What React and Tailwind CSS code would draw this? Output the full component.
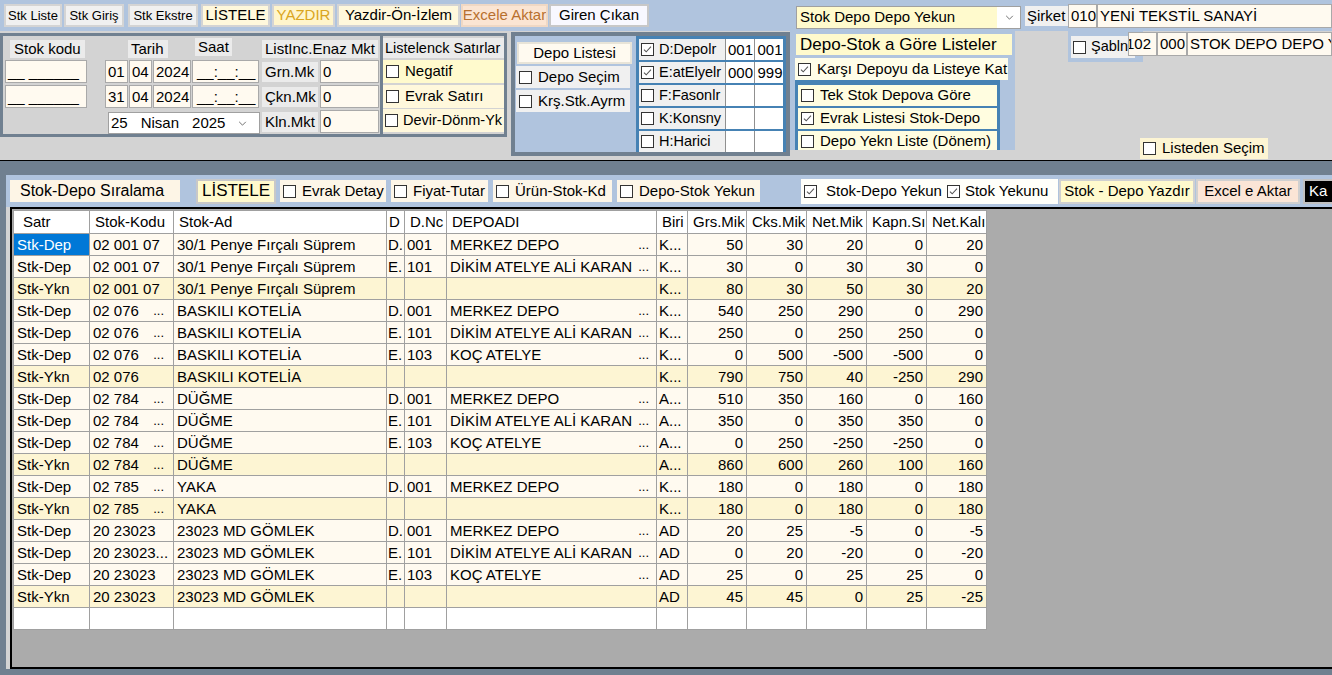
import React from 'react';

const Check = ({ on }) => (
  <span className="inline-flex h-[13px] w-[13px] shrink-0 items-center justify-center border border-[#333] bg-white">
    {on && (
      <svg viewBox="0 0 13 13" className="h-[11px] w-[11px]">
        <path d="M2.3 6.6l2.7 2.7 5.6-6.2" fill="none" stroke="#555" strokeWidth="1.2" />
      </svg>
    )}
  </span>
);

const Cb = ({ on, children, className = '', t = 'text-[15px] gap-[6px] pl-[3px]' }) => (
  <div className={`flex shrink-0 items-center overflow-hidden whitespace-nowrap ${t} ${className}`}>
    <Check on={on} />
    <span>{children}</span>
  </div>
);

const Box = ({ children, className = '', p = 'pl-[2px]' }) => (
  <div className={`shrink-0 overflow-hidden whitespace-nowrap border border-[#a9a9a9] bg-[#fffaf0] text-[15px] leading-[21px] ${p} ${className}`}>
    {children}
  </div>
);

const Lbl = ({ children, className = '', t = 'text-[15px] leading-[18px] pl-[3px]' }) => (
  <div className={`shrink-0 overflow-hidden whitespace-nowrap bg-[#ebebeb] ${t} ${className}`}>
    {children}
  </div>
);

const Btn = ({ children, className = '' }) => (
  <div className={`flex shrink-0 items-center justify-center overflow-hidden whitespace-nowrap border-2 ${className}`}>
    {children}
  </div>
);

const rows = [
  ['Dep', '02 001 07', false, '30/1 Penye Fırçalı Süprem', 'D.', '001', 'MERKEZ DEPO', 'K...', [50, 30, 20, 0, 20]],
  ['Dep', '02 001 07', false, '30/1 Penye Fırçalı Süprem', 'E.', '101', 'DİKİM ATELYE ALİ KARAN', 'K...', [30, 0, 30, 30, 0]],
  ['Ykn', '02 001 07', false, '30/1 Penye Fırçalı Süprem', '', '', '', 'K...', [80, 30, 50, 30, 20]],
  ['Dep', '02 076', true, 'BASKILI KOTELİA', 'D.', '001', 'MERKEZ DEPO', 'K...', [540, 250, 290, 0, 290]],
  ['Dep', '02 076', true, 'BASKILI KOTELİA', 'E.', '101', 'DİKİM ATELYE ALİ KARAN', 'K...', [250, 0, 250, 250, 0]],
  ['Dep', '02 076', true, 'BASKILI KOTELİA', 'E.', '103', 'KOÇ ATELYE', 'K...', [0, 500, -500, -500, 0]],
  ['Ykn', '02 076', false, 'BASKILI KOTELİA', '', '', '', 'K...', [790, 750, 40, -250, 290]],
  ['Dep', '02 784', true, 'DÜĞME', 'D.', '001', 'MERKEZ DEPO', 'A...', [510, 350, 160, 0, 160]],
  ['Dep', '02 784', true, 'DÜĞME', 'E.', '101', 'DİKİM ATELYE ALİ KARAN', 'A...', [350, 0, 350, 350, 0]],
  ['Dep', '02 784', true, 'DÜĞME', 'E.', '103', 'KOÇ ATELYE', 'A...', [0, 250, -250, -250, 0]],
  ['Ykn', '02 784', true, 'DÜĞME', '', '', '', 'A...', [860, 600, 260, 100, 160]],
  ['Dep', '02 785', true, 'YAKA', 'D.', '001', 'MERKEZ DEPO', 'K...', [180, 0, 180, 0, 180]],
  ['Ykn', '02 785', true, 'YAKA', '', '', '', 'K...', [180, 0, 180, 0, 180]],
  ['Dep', '20 23023', false, '23023 MD GÖMLEK', 'D.', '001', 'MERKEZ DEPO', 'AD', [20, 25, -5, 0, -5]],
  ['Dep', '20 23023...', false, '23023 MD GÖMLEK', 'E.', '101', 'DİKİM ATELYE ALİ KARAN', 'AD', [0, 20, -20, 0, -20]],
  ['Dep', '20 23023', false, '23023 MD GÖMLEK', 'E.', '103', 'KOÇ ATELYE', 'AD', [25, 0, 25, 25, 0]],
  ['Ykn', '20 23023', false, '23023 MD GÖMLEK', '', '', '', 'AD', [45, 45, 0, 25, -25]],
];

const cols = [76, 84, 213, 18, 42, 210, 31, 59, 60, 60, 60, 60];
const heads = ['Satr', 'Stok-Kodu', 'Stok-Ad', 'D', 'D.Nc', 'DEPOADI', 'Biri', 'Grs.Mik', 'Cks.Mik', 'Net.Mik', 'Kapn.Sı', 'Net.Kalı'];

const td = 'border border-[#a0a0a0] overflow-hidden whitespace-nowrap py-0 leading-[20px]';

export default function App() {
  return (
    <div className="h-[675px] w-[1332px] overflow-hidden bg-[#d3d3d3] font-['Liberation_Sans',Arial,sans-serif] text-black">
      {/* ust serit */}
      <div className="flex h-[31px] items-start bg-[#b0c4de]">
        <div className="ml-[4px] mt-[4px] flex shrink-0 gap-[2px]">
          <Btn className="h-[23px] w-[58px] border-[#d4d4d4] bg-[#f0f0f0] text-[13px]">Stk Liste</Btn>
          <Btn className="h-[23px] w-[60px] border-[#d4d4d4] bg-[#f0f0f0] text-[13px]">Stk Giriş</Btn>
          <Btn className="ml-[2px] h-[23px] w-[70px] border-[#d4d4d4] bg-[#f0f0f0] text-[13px]">Stk Ekstre</Btn>
          <Btn className="ml-[1px] h-[23px] w-[69px] border-[#d4d4d4] bg-[#fff8dc] text-[15px]">LİSTELE</Btn>
          <Btn className="h-[23px] w-[63px] border-[#d4d4d4] bg-[#fff5cc] text-[15px] text-[#daa520]">YAZDIR</Btn>
          <Btn className="h-[23px] w-[123px] border-[#d4d4d4] bg-[#fff8dc] text-[15px]">Yazdir-Ön-İzlem</Btn>
          <Btn className="-ml-[1px] h-[23px] w-[87px] border-[#f0d8c4] bg-[#fbe5d3] text-[15px] text-[#b8702e]">Excele Aktar</Btn>
          <Btn className="-ml-[1px] h-[23px] w-[100px] border-[#c8c8c8] bg-[#f8f8ff] text-[15px]">Giren Çıkan</Btn>
        </div>
        <div className="ml-[147px] mt-[6px] flex h-[23px] w-[225px] shrink-0 items-center border border-[#a0a0a0] bg-white">
          <div className="flex h-full w-[200px] items-center bg-[#fffacd] pl-[3px] text-[15px]">Stok Depo Depo Yekun</div>
          <svg viewBox="0 0 10 6" className="ml-[8px] h-[5px] w-[9px]">
            <path d="M1 1l4 4 4-4" fill="none" stroke="#555" strokeWidth="1" />
          </svg>
        </div>
        <div className="ml-[4px] mt-[6px] h-[20px] w-[43px] shrink-0 bg-[#f0f0f0] pl-[2px] text-[15px] leading-[20px]">Şirket</div>
        <Box className="mt-[4px] h-[24px] w-[29px]">010</Box>
        <Box className="mt-[4px] h-[24px] min-w-0 flex-1">YENİ TEKSTİL SANAYİ</Box>
      </div>

      {/* ust paneller */}
      <div className="flex h-[129px]">
        <div className="mt-[2px] flex h-[104px] w-[383px] shrink-0 border-[3px] border-[#708090]">
          <div className="ml-[2px] w-[82px] pt-[4px]">
            <Lbl className="ml-[5px] h-[18px] w-[75px]" t="text-[15px] leading-[18px] pl-[4px]">Stok kodu</Lbl>
            <Box className="mt-[2px] h-[23px]">__ ______</Box>
            <Box className="mt-[2px] h-[23px]">__ ______</Box>
          </div>
          <div className="ml-[18px] w-[155px]">
            <div className="flex h-[24px] items-start">
              <Lbl className="ml-[23px] mt-[4px] h-[18px] w-[40px]">Tarih</Lbl>
              <Lbl className="ml-[27px] mt-[2px] h-[18px] w-[37px]">Saat</Lbl>
            </div>
            {[['01', '04', '2024'], ['31', '04', '2024']].map((d, i) => (
              <div key={i} className={`flex gap-[1px] ${i ? 'mt-[2px]' : ''}`}>
                <Box className="h-[23px] w-[23px]">{d[0]}</Box>
                <Box className="h-[23px] w-[23px]">{d[1]}</Box>
                <Box className="h-[23px] w-[38px]">{d[2]}</Box>
                <Box className="h-[23px] w-[67px]" p="pl-[4px]">__:__:__</Box>
              </div>
            ))}
            <div className="ml-[3px] mt-[4px] flex h-[22px] w-[152px] items-center border border-[#a0a0a0] bg-white text-[15px]">
              <span className="ml-[2px]">25</span>
              <span className="ml-[13px]">Nisan</span>
              <span className="ml-[13px]">2025</span>
              <svg viewBox="0 0 10 6" className="ml-[13px] h-[5px] w-[9px]">
                <path d="M1 1l4 4 4-4" fill="none" stroke="#555" strokeWidth="1" />
              </svg>
            </div>
          </div>
          <div className="ml-[2px] w-[117px] pt-[4px]">
            <Lbl className="h-[18px] w-[116px]">ListInc.Enaz Mkt</Lbl>
            {['Grn.Mk', 'Çkn.Mk', 'Kln.Mkt'].map((l) => (
              <div key={l} className="mt-[2px] flex h-[23px] items-center">
                <Lbl className="h-[20px] w-[56px]" t="text-[15px] leading-[20px] pl-[3px]">{l}</Lbl>
                <Box className="ml-[2px] h-[23px] w-[59px]">0</Box>
              </div>
            ))}
          </div>
        </div>

        <div className="mt-[2px] h-[104px] w-[124px] shrink-0 border-y-[3px] border-r-[3px] border-[#708090]">
          <Lbl className="mt-[2px] h-[20px] w-[121px]" t="text-[14.5px] leading-[20px] pl-[2px]">Listelenck Satırlar</Lbl>
          <Cb className="mt-[2px] h-[23px] w-[121px] bg-[#fffacd]">Negatif</Cb>
          <Cb className="mt-[2px] h-[23px] w-[121px] bg-[#fff8dc]">Evrak Satırı</Cb>
          <Cb className="mt-[1px] h-[23px] w-[121px] bg-[#fff8dc]" t="text-[14.5px] gap-[5px] pl-[2px]">Devir-Dönm-Yk</Cb>
        </div>

        <div className="ml-[4px] mt-[1px] flex h-[124px] w-[279px] shrink-0 border-[4px] border-[#708090] bg-[#b0c4de]">
          <div className="w-[121px] pl-[1px] pt-[6px]">
            <Btn className="ml-[1px] h-[22px] w-[115px] border-[#e8e4d8] bg-[#fffaf0] text-[15px]">Depo Listesi</Btn>
            <Cb className="mt-[2px] h-[22px] w-[114px] bg-[#f0f0f0]">Depo Seçim</Cb>
            <Cb className="mt-[2px] h-[22px] w-[114px] bg-[#f0f0f0]">Krş.Stk.Ayrm</Cb>
          </div>
          <div className="flex w-[150px] flex-col gap-[2px] bg-[#4682b4] px-[3px] pt-[3px]">
            {[
              ['D:Depolr', true, '001', '001'],
              ['E:atElyelr', true, '000', '999'],
              ['F:Fasonlr', false, '', ''],
              ['K:Konsny', false, '', ''],
              ['H:Harici', false, '', ''],
            ].map(([l, on, a, b]) => (
              <div key={l} className="flex h-[21px]">
                <Cb on={on} className="w-[86px] bg-[#f0f0f0]" t="text-[14.5px] gap-[5px] pl-[2px]">{l}</Cb>
                <div className="w-[31px] border-l border-[#909090] bg-white pl-[2px] text-[15px] leading-[21px]">{a}</div>
                <div className="w-[30px] border-l border-[#909090] bg-white pl-[2px] text-[15px] leading-[21px]">{b}</div>
              </div>
            ))}
          </div>
        </div>

        <div className="h-[119px] w-[225px] shrink-0 overflow-hidden bg-[#b0c4de]">
          <div className="ml-[6px] mt-[3px] h-[21px] w-[216px] overflow-hidden whitespace-nowrap bg-[#fffacd] pl-[4px] text-[17px] leading-[21px]">Depo-Stok a Göre Listeler</div>
          <Cb on className="ml-[5px] mt-[3px] h-[22px] w-[213px] bg-[#fffde8]">Karşı Depoyu da Listeye Kat</Cb>
          <div className="ml-[5px] flex h-[72px] w-[205px] flex-col gap-[2px] bg-[#4682b4] px-[3px] pt-[5px]">
            <Cb className="h-[21px] bg-[#fffde0]">Tek Stok Depova Göre</Cb>
            <Cb on className="h-[21px] bg-[#fffde0]">Evrak Listesi Stok-Depo</Cb>
            <Cb className="h-[21px] bg-[#fffde0]">Depo Yekn Liste (Dönem)</Cb>
          </div>
        </div>

        <div className="flex min-w-0 flex-1 flex-col">
          <div className="flex items-start">
            <div className="ml-[53px] h-[31px] w-[75px] shrink-0 bg-[#b0c4de] pl-[3px] pt-[5px]">
              <Cb className="h-[22px] w-[64px] bg-[#f0f0f0]" t="text-[14.5px] gap-[5px] pl-[2px]">Şabln</Cb>
            </div>
            <div className="-ml-[15px] mt-[1px] flex min-w-0 flex-1">
              <Box className="h-[24px] w-[29px]" p="pl-0">
                <span className="-ml-[3px]">102</span>
              </Box>
              <Box className="h-[24px] w-[30px]">000</Box>
              <Box className="h-[24px] min-w-0 flex-1">STOK DEPO DEPO YEKUN</Box>
            </div>
          </div>
          <Cb className="mb-[1px] ml-[125px] mt-auto h-[21px] w-[128px] bg-[#fdf5d3]">Listeden Seçim</Cb>
        </div>
      </div>

      {/* alt bolum */}
      <div className="h-px bg-black" />
      <div className="h-[514px] bg-[#708090] pb-[6px] pl-[6px] pt-[14px]">
        <div className="flex h-[32px] items-center overflow-hidden bg-[#b0c4de]">
          <div className="ml-[4px] h-[22px] w-[170px] shrink-0 bg-[#fdf5e6] pl-[10px] text-[16px] leading-[22px]">Stok-Depo Sıralama</div>
          <Btn className="ml-[16px] h-[25px] w-[80px] border-[#c8c8c8] bg-[#fffacd] text-[17px]">LİSTELE</Btn>
          <Cb className="ml-[4px] h-[22px] w-[106px] bg-[#fdf6e8]">Evrak Detay</Cb>
          <Cb className="ml-[5px] h-[22px] w-[97px] bg-[#fdf6e8]">Fiyat-Tutar</Cb>
          <Cb className="ml-[5px] h-[22px] w-[119px] bg-[#fdf6e8]">Ürün-Stok-Kd</Cb>
          <Cb className="ml-[5px] h-[22px] w-[143px] bg-[#fdf6e8]">Depo-Stok Yekun</Cb>
          <div className="ml-[41px] flex h-[25px] w-[257px] shrink-0 items-center bg-[#fffffa]">
            <Cb on t="text-[15px] gap-[9px] pl-[3px]">Stok-Depo Yekun</Cb>
            <Cb on className="ml-[2px]" t="text-[15px] gap-[5px] pl-[3px]">Stok Yekunu</Cb>
          </div>
          <Btn className="ml-[1px] h-[25px] w-[136px] border-[#d0d0d0] bg-[#fffacd] text-[15px]">Stok - Depo Yazdır</Btn>
          <Btn className="ml-[1px] h-[25px] w-[104px] border-[#d0d0d0] bg-[#fbe5d6] text-[15px]">Excel e Aktar</Btn>
          <div className="ml-[3px] flex h-[25px] w-[40px] shrink-0 items-center border-2 border-[#c0c0c0] bg-black pl-[4px] text-[15px] text-white">Ka</div>
        </div>
        <div className="h-[462px] bg-[#d3d3d3] pl-[4px]">
          <div className="h-full border-b-2 border-l-2 border-t-2 border-black bg-[#ababab] pl-[1px] pt-[1px]">
            <table className="w-[973px] table-fixed border-collapse text-[15px]">
              <colgroup>
                {cols.map((w, i) => (
                  <col key={i} style={{ width: w }} />
                ))}
              </colgroup>
              <thead>
                <tr className="h-[23px] bg-white">
                  {heads.map((h, i) => (
                    <th key={h} className={`${td} pr-[2px] text-left font-normal ${i === 0 ? 'pl-[9px]' : i === 3 ? 'pl-[2px]' : 'pl-[5px]'}`}>{h}</th>
                  ))}
                </tr>
              </thead>
              <tbody>
                {rows.map(([t, kod, dots, ad, d, dn, dep, biri, n], r) => (
                  <tr key={r} className={`h-[22px] ${t === 'Ykn' ? 'bg-[#fdf5d3]' : 'bg-[#fffaf0]'}`}>
                    <td className={`${td} px-[3px] ${r === 0 ? 'bg-[#0078d7] text-white' : ''}`}>Stk-{t}</td>
                    <td className={`${td} px-[3px]`}>
                      <div className="flex justify-between pr-[6px]">
                        <span>{kod}</span>
                        {dots && <span className="text-[13px]">...</span>}
                      </div>
                    </td>
                    <td className={`${td} px-[3px]`}>{ad}</td>
                    <td className={`${td} px-[1px]`}>{d}</td>
                    <td className={`${td} px-[2px]`}>{dn}</td>
                    <td className={`${td} px-[3px]`}>
                      <div className="flex justify-between pr-[4px]">
                        <span>{dep}</span>
                        {dep && <span className="text-[13px]">...</span>}
                      </div>
                    </td>
                    <td className={`${td} px-[2px]`}>{biri}</td>
                    {n.map((v, i) => (
                      <td key={i} className={`${td} px-[3px] text-right`}>{v}</td>
                    ))}
                  </tr>
                ))}
                <tr className="h-[22px] bg-white">
                  {cols.map((_, i) => (
                    <td key={i} className={td} />
                  ))}
                </tr>
              </tbody>
            </table>
          </div>
        </div>
      </div>
    </div>
  );
}
